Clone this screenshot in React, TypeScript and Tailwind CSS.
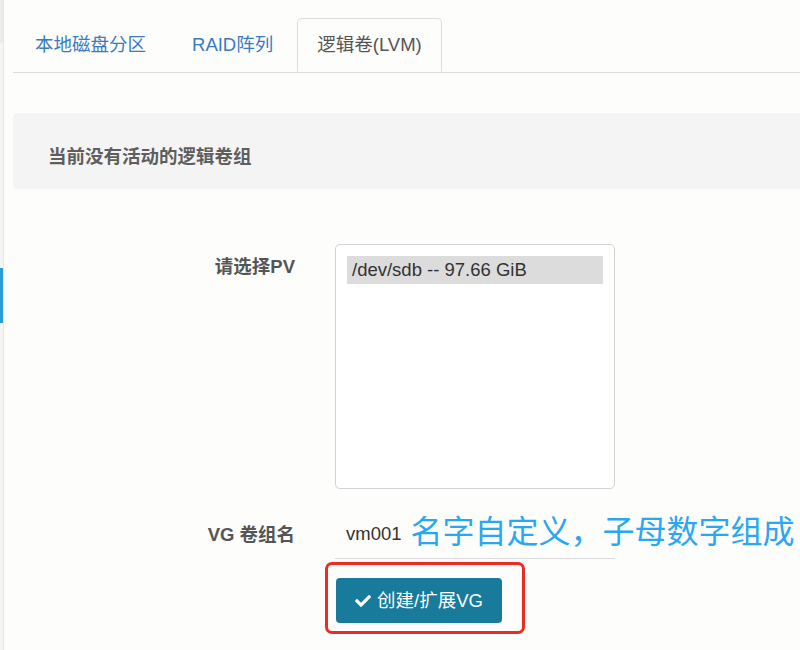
const font = { fontFamily: '"Liberation Sans", "Noto Sans CJK SC", sans-serif' };

function CheckIcon() {
  return (
    <svg viewBox="0 0 512 512" className="w-[16px] h-[16px] fill-white">
      <path d="M173.898 439.404l-166.4-166.4c-9.997-9.997-9.997-26.206 0-36.204l36.203-36.204c9.997-9.998 26.207-9.998 36.204 0L192 312.69 432.095 72.596c9.997-9.997 26.207-9.997 36.204 0l36.203 36.204c9.997 9.997 9.997 26.206 0 36.204l-294.4 294.401c-9.998 9.997-26.207 9.997-36.204-.001z" />
    </svg>
  );
}

export default function App() {
  return (
    <div
      className="flex w-[800px] h-[650px] overflow-hidden bg-[#fdfdfb] text-[18.5px] leading-[26px]"
      style={font}
    >
      {/* sidebar edge */}
      <div className="w-[4px] shrink-0 flex flex-col border-r border-[#e6e6e4]">
        <div className="h-[43px] bg-[#ebebeb]" />
        <div className="h-[225px] bg-[#f5f5f3]" />
        <div className="h-[55px] bg-[#2a9dd8]" />
        <div className="flex-1 bg-[#f5f5f3]" />
      </div>

      <div className="pl-[9px] pt-[18px] w-[830px] shrink-0">
        {/* tabs */}
        <ul className="flex border-b border-[#dddddd]">
          <li className="mr-[2px]">
            <a className="block px-[21px] py-[13px] border border-transparent text-[#3a7bbf]">
              本地磁盘分区
            </a>
          </li>
          <li className="mr-[2px]">
            <a className="block px-[21px] py-[13px] border border-transparent text-[#3a7bbf]">
              RAID阵列
            </a>
          </li>
          <li className="-mb-px">
            <a className="block px-[19px] py-[13px] border border-[#dddddd] border-b-[#fdfdfb] rounded-t-[5px] bg-[#fdfdfb] text-[#555555]">
              逻辑卷(LVM)
            </a>
          </li>
        </ul>

        {/* status panel */}
        <div className="mt-[40px] h-[76px] rounded-[5px] bg-[#f4f4f4] pl-[35px] pt-[31px] font-bold text-[#5e5e5e]">
          当前没有活动的逻辑卷组
        </div>

        {/* form */}
        <div className="mt-[55px] flex flex-col">
          <div className="flex">
            <label className="w-[282px] text-right font-bold text-[#555555] pt-[10px]">请选择PV</label>
            <div className="ml-[40px] w-[280px] h-[245px] border border-[#d2d2d2] rounded-[5px] bg-white p-[11px]">
              <div className="h-[28px] bg-[#dcdcdc] pl-[5px] text-[#333333] leading-[28px]">
                /dev/sdb -- 97.66 GiB
              </div>
            </div>
          </div>

          <div className="flex mt-[21px]">
            <label className="w-[282px] text-right font-bold text-[#555555] self-center pt-[1px]">VG 卷组名</label>
            <div className="ml-[40px] w-[280px] h-[49px] border-b border-[#dcdcdc] flex items-center pl-[11px]">
              <span className="text-[#333333]">vm001</span>
              <span className="ml-[9px] whitespace-nowrap text-[32px] leading-[40px] text-[#2aa7f1] -mt-[4px]">
                名字自定义，子母数字组成
              </span>
            </div>
          </div>

          <div className="flex mt-[3px]">
            <div className="w-[282px]" />
            <div className="ml-[30px] w-[200px] h-[72px] border-[3px] border-[#ec2b25] rounded-[7px] pt-[13px] pl-[8px]">
              <button className="w-[166px] h-[45px] rounded-[4px] bg-[#187b9c] text-white flex items-center justify-center gap-[6px]">
                <CheckIcon />
                <span>创建/扩展VG</span>
              </button>
            </div>
          </div>
        </div>
      </div>
    </div>
  );
}
